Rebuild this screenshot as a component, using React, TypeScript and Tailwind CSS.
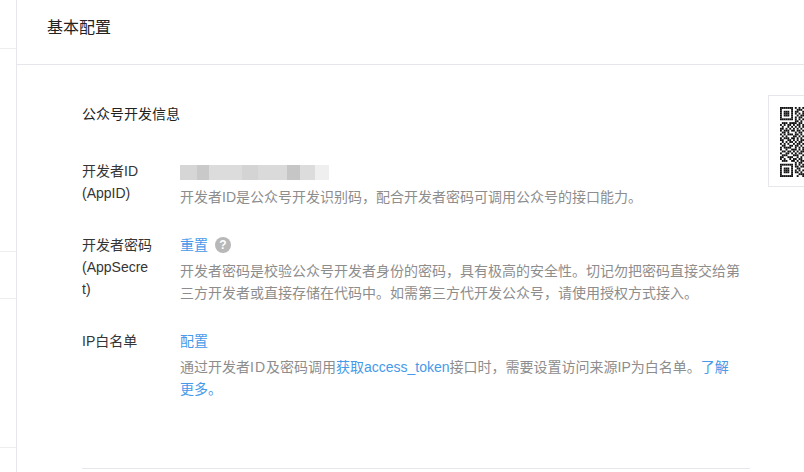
const cjk = 'font-["Liberation_Sans","Noto_Sans_CJK_SC",sans-serif]';

const blurShades = [
  'bg-[#d6d6d6] w-[17px]',
  'bg-[#c9c9c9] w-[12px]',
  'bg-[#dcdcdc] w-[33px]',
  'bg-[#d4d4d4] w-[16px]',
  'bg-[#dadada] w-[29px]',
  'bg-[#c6c6c6] w-[13px]',
  'bg-[#dcdcdc] w-[15px]',
  'bg-[#efefef] w-[14px]',
];

// only the left columns of the code show, the window cuts off the rest
const qrCols = [
  '1111111001011010110101101011001111111',
  '1000001010110101011010010110101000001',
  '1011101011001110100111010101101011101',
  '1011101010011001101001101100101011101',
  '1011101001101110110101011010001011101',
  '1000001011010010011011010011001000001',
  '1111111010101010101010101010101111111',
  '0000000011011001110100110101100000000',
  '1011011110100111001011101101011101100',
  '0110100101011010110110010110100110101',
  '1101011011101101001101101001011011010',
  '0100110110010110111010011011110100110',
  '1011101001101001010101110100101101011',
  '0110010110110111101010011011010011100',
];

function QrCode() {
  return (
    <div className="h-[92px] w-[50px] shrink-0 overflow-hidden border border-r-0 border-[#e7e7eb] bg-white pl-[11px] pt-[11px]">
      <svg width="26" height="70" viewBox="0 0 14 37" preserveAspectRatio="none" className="block">
        {qrCols.map((col, x) =>
          col.split('').map((c, y) =>
            c === '1' ? <rect key={`${x}-${y}`} x={x} y={y} width="1" height="1" fill="#111" /> : null,
          ),
        )}
      </svg>
    </div>
  );
}

function Row({ label, children }: { label: React.ReactNode; children: React.ReactNode }) {
  return (
    <div className="flex">
      <div className="mr-[26px] w-[72px] shrink-0 break-all text-[14px] leading-[22px] text-[#353535]">{label}</div>
      <div className="w-[561px] shrink-0">{children}</div>
    </div>
  );
}

function Desc({ children }: { children: React.ReactNode }) {
  return <p className="mt-[4px] text-[14px] leading-[22px] text-[#8d8d8d]">{children}</p>;
}

export default function App() {
  return (
    <div className={`${cjk} flex h-[472px] w-[804px] overflow-hidden bg-white`}>
      <aside className="flex w-[17px] shrink-0 flex-col border-r border-[#e7e7eb]">
        <div className="h-[49px] border-b border-[#eeeeee]" />
        <div className="h-[203px] border-b border-[#eeeeee]" />
        <div className="h-[47px] border-b border-[#eeeeee]" />
        <div className="h-[149px] border-b border-[#eeeeee]" />
      </aside>

      <main className="min-w-0 flex-1">
        <header className="h-[65px] border-b border-[#e7e7eb] pl-[30px] pt-[16px] text-[16px] leading-[24px] text-[#222]">
          基本配置
        </header>

        <div className="flex pl-[65px]">
          <div className="w-[686px] shrink-0 pr-[18px]">
            <h2 className="pt-[38px] text-[14px] leading-[22px] text-[#222]">公众号开发信息</h2>

            <div className="mt-[35px] flex flex-col gap-[26px]">
              <Row
                label={
                  <>
                    开发者ID
                    <br />
                    (AppID)
                  </>
                }
              >
                <div className="flex h-[22px] pt-[5px]">
                  {blurShades.map((shade, i) => (
                    <span key={i} className={`${shade} h-[15px]`} />
                  ))}
                </div>
                <Desc>开发者ID是公众号开发识别码，配合开发者密码可调用公众号的接口能力。</Desc>
              </Row>

              <Row
                label={
                  <>
                    开发者密码
                    <br />
                    (AppSecret)
                  </>
                }
              >
                <div className="flex h-[22px] items-center gap-[7px]">
                  <a className="text-[14px] text-[#459ae9]">重置</a>
                  <span className="flex size-[16px] items-center justify-center rounded-full bg-[#b8b8b8] text-[12px] font-bold text-white">
                    ?
                  </span>
                </div>
                <Desc>
                  开发者密码是校验公众号开发者身份的密码，具有极高的安全性。切记勿把密码直接交给第三方开发者或直接存储在代码中。如需第三方代开发公众号，请使用授权方式接入。
                </Desc>
              </Row>

              <Row label="IP白名单">
                <a className="block h-[22px] text-[14px] leading-[22px] text-[#459ae9]">配置</a>
                <Desc>
                  通过开发者<span className="tracking-[1px]">ID</span>及密码调用
                  <a className="text-[#459ae9]">获取access_token</a>
                  接口时，需要设置访问来源IP为白名单。<a className="text-[#459ae9]">了解更多。</a>
                </Desc>
              </Row>
            </div>

            <div className="mt-[68px] border-t border-[#e7e7eb]" />
          </div>

          <div className="pt-[30px]">
            <QrCode />
          </div>
        </div>
      </main>
    </div>
  );
}
